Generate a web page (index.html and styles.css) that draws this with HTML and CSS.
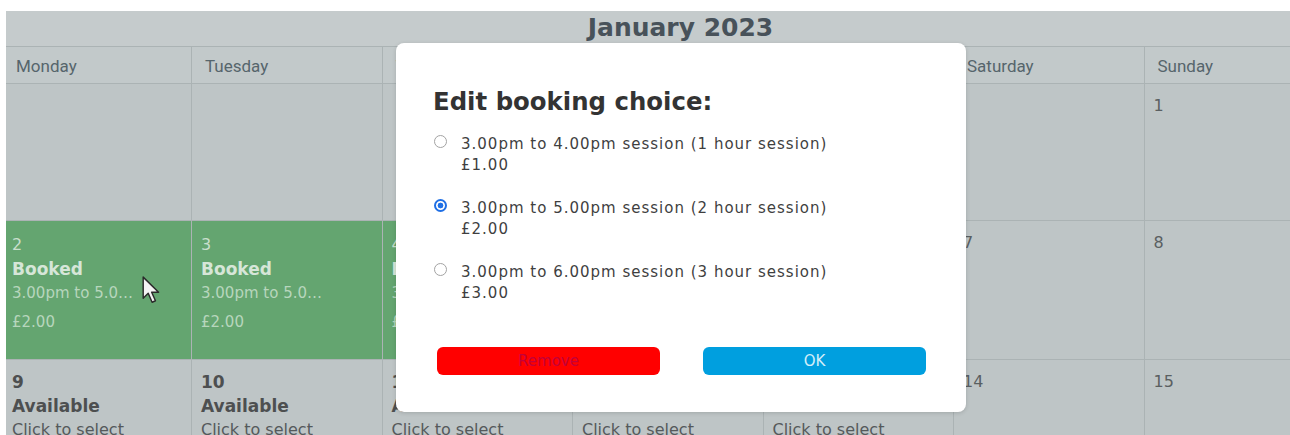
FILE: index.html
```html
<!DOCTYPE html>
<html lang="en">
<head>
<meta charset="utf-8">
<title>Bookings – January 2023</title>
<link rel="stylesheet" href="styles.css">
</head>
<body>
<div class="page">
  <div class="calendar">
    <div class="cal-title">January 2023</div>
    <div class="cal-grid">
      <div class="day-name">Monday</div>
      <div class="day-name">Tuesday</div>
      <div class="day-name">Wednesday</div>
      <div class="day-name">Thursday</div>
      <div class="day-name">Friday</div>
      <div class="day-name">Saturday</div>
      <div class="day-name">Sunday</div>

      <div class="cell"></div>
      <div class="cell"></div>
      <div class="cell"></div>
      <div class="cell"></div>
      <div class="cell"></div>
      <div class="cell"></div>
      <div class="cell"><div class="num">1</div></div>

      <div class="cell booked"><div class="num">2</div><div class="status">Booked</div><div class="session">3.00pm to 5.00pm session (2 hour session)</div><div class="price">£2.00</div></div>
      <div class="cell booked"><div class="num">3</div><div class="status">Booked</div><div class="session">3.00pm to 5.00pm session (2 hour session)</div><div class="price">£2.00</div></div>
      <div class="cell booked"><div class="num">4</div><div class="status">Booked</div><div class="session">3.00pm to 5.00pm session (2 hour session)</div><div class="price">£2.00</div></div>
      <div class="cell booked"><div class="num">5</div><div class="status">Booked</div><div class="session">3.00pm to 5.00pm session (2 hour session)</div><div class="price">£2.00</div></div>
      <div class="cell booked"><div class="num">6</div><div class="status">Booked</div><div class="session">3.00pm to 5.00pm session (2 hour session)</div><div class="price">£2.00</div></div>
      <div class="cell"><div class="num">7</div></div>
      <div class="cell"><div class="num">8</div></div>

      <div class="cell open"><div class="num">9</div><div class="status">Available</div><div class="hint">Click to select</div></div>
      <div class="cell open"><div class="num">10</div><div class="status">Available</div><div class="hint">Click to select</div></div>
      <div class="cell open"><div class="num">11</div><div class="status">Available</div><div class="hint">Click to select</div></div>
      <div class="cell open"><div class="num">12</div><div class="status">Available</div><div class="hint">Click to select</div></div>
      <div class="cell open"><div class="num">13</div><div class="status">Available</div><div class="hint">Click to select</div></div>
      <div class="cell"><div class="num">14</div></div>
      <div class="cell"><div class="num">15</div></div>
    </div>
  </div>

  <svg class="pointer" width="18" height="29" viewBox="0 0 16 26" aria-hidden="true">
    <path d="M1 1 L1 20 L5.5 15.5 L9 23.5 L12 22.2 L8.6 14.5 L14.8 14.5 Z" fill="#f4f4f4" stroke="#2a2a2a" stroke-width="1.3" stroke-linejoin="round"/>
  </svg>

  <div class="modal">
    <h2 class="modal-title">Edit booking choice:</h2>
    <form class="choices">
      <label class="choice">
        <input type="radio" name="session" class="radio">
        <span class="choice-text">3.00pm to 4.00pm session (1 hour session)<br>£1.00</span>
      </label>
      <label class="choice">
        <input type="radio" name="session" class="radio" checked>
        <span class="choice-text">3.00pm to 5.00pm session (2 hour session)<br>£2.00</span>
      </label>
      <label class="choice">
        <input type="radio" name="session" class="radio">
        <span class="choice-text">3.00pm to 6.00pm session (3 hour session)<br>£3.00</span>
      </label>
    </form>
    <div class="actions">
      <button type="button" class="btn btn-remove">Remove</button>
      <button type="button" class="btn btn-ok">OK</button>
    </div>
  </div>
</div>
</body>
</html>
```

FILE: styles.css
```css
html, body {
  margin: 0;
  padding: 0;
  background: #ffffff;
  overflow: hidden;
}

.page {
  position: relative;
  width: 1290px;
  height: 435px;
  padding: 11px 0 0 6px;
  box-sizing: border-box;
  overflow: hidden;
  font-family: "DejaVu Sans", Verdana, sans-serif;
}

.calendar {
  width: 1329px;
  background: #bec5c6;
  overflow: hidden;
}

.cal-title {
  height: 35px;
  border-bottom: 1px solid #abb3b4;
  background: #c5cbcc;
  color: #48525a;
  font-weight: bold;
  font-size: 25px;
  line-height: 34px;
  text-align: center;
  padding-left: 20px;
}

/* first column is partly scrolled out of view on the left */
.cal-grid {
  display: grid;
  grid-template-columns: 189px repeat(6, 190.5px);
  grid-template-rows: 37px 137px 139px 90px;
  margin-left: -3px;
}

.day-name,
.cell {
  box-sizing: border-box;
  border-right: 1px solid #abb3b4;
  border-bottom: 1px solid #abb3b4;
  overflow: hidden;
}

.day-name {
  background: #c2c9ca;
  font-family: Roboto, "Liberation Sans", Arial, sans-serif;
  font-size: 17px;
  color: #56656c;
  padding: 9px 0 0 13px;
}

.cell {
  padding: 10px 0 0 9px;
  color: #5a5f61;
  font-size: 16px;
  line-height: 24px;
}

.cell .num {
  height: 24px;
}

.booked {
  background: #64a570;
  color: #c9dfcd;
  padding-top: 12px;
}

.booked .status {
  font-weight: bold;
  font-size: 17px;
  color: #d6e6d8;
}

.booked .session {
  width: 129px;
  white-space: nowrap;
  overflow: hidden;
  text-overflow: ellipsis;
  font-size: 15px;
  color: #b7d6bd;
}

.booked .price {
  margin-top: 5px;
  font-size: 15px;
  color: #b7d6bd;
}

.open {
  color: #4d4f50;
}

.open .num,
.open .status {
  font-weight: bold;
  font-size: 17px;
}

.open .hint {
  font-size: 16px;
  color: #55595b;
}

/* mouse pointer resting over the Monday booking */
.pointer {
  position: absolute;
  left: 142px;
  top: 276px;
}

/* booking dialog */
.modal {
  position: absolute;
  left: 396px;
  top: 43px;
  width: 570px;
  height: 369px;
  box-sizing: border-box;
  padding: 44px 40px 0 37px;
  background: #ffffff;
  border-radius: 8px;
  box-shadow: 0 1px 4px rgba(0, 0, 0, 0.15);
  color: #3a3a3a;
}

.modal-title {
  margin: 0 0 17px;
  font-size: 24.4px;
  line-height: 30px;
  font-weight: bold;
  color: #333333;
}

.choices {
  display: flex;
  flex-direction: column;
  gap: 22px;
  margin: 0;
}

.choice {
  display: flex;
  align-items: flex-start;
  gap: 14px;
  font-size: 15px;
  letter-spacing: 1px;
  line-height: 21px;
  color: #3f3f3f;
}

.radio {
  appearance: none;
  -webkit-appearance: none;
  box-sizing: border-box;
  margin: 1px 0 0 1px;
  width: 13px;
  height: 13px;
  border: 1px solid #a3a3a3;
  border-radius: 50%;
  background: #ffffff;
  flex: none;
}

.radio:checked {
  border: 2px solid #1f6fe5;
  background: radial-gradient(circle, #1f6fe5 0 2.6px, #ffffff 3.2px);
}

.actions {
  display: flex;
  gap: 43px;
  margin-top: 43px;
  padding-left: 4px;
}

.btn {
  width: 223px;
  height: 28px;
  border: none;
  border-radius: 6px;
  font-family: "DejaVu Sans", Verdana, sans-serif;
  font-size: 15px;
  padding: 0;
}

.btn-remove {
  background: #ff0000;
  color: #c4003a;
}

.btn-ok {
  background: #009fdf;
  color: #d3eef9;
}
```
